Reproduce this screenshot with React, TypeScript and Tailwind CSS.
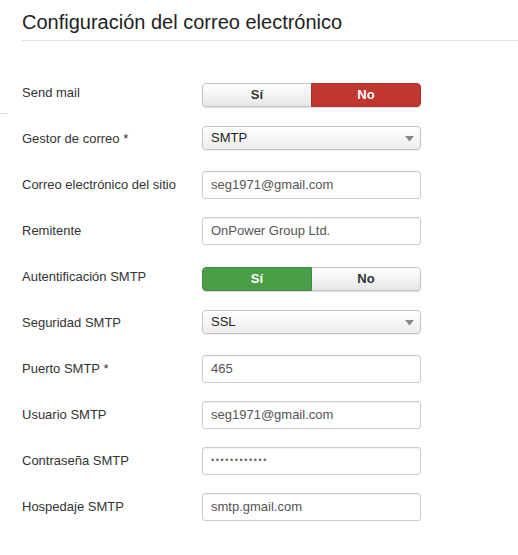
import React from "react";

const font = { fontFamily: '"Liberation Sans", Arial, sans-serif' };

function Toggle({ value }: { value: "yes" | "no" }) {
  const base =
    "flex-1 flex items-center justify-center text-[13px] font-bold h-full";
  return (
    <div className="flex w-[219px] h-[24px] mt-[4px] rounded-[4px] overflow-hidden shadow-[0_1px_1px_rgba(0,0,0,0.15)]">
      {value === "yes" ? (
        <>
          <div className={`${base} text-white bg-[#4a9e48] border border-[#3f8a3e] rounded-l-[4px]`}>Sí</div>
          <div className={`${base} text-[#333] bg-gradient-to-b from-white to-[#e6e6e6] border border-l-0 border-[#c4c4c4] rounded-r-[4px]`}>No</div>
        </>
      ) : (
        <>
          <div className={`${base} text-[#333] bg-gradient-to-b from-white to-[#e6e6e6] border border-r-0 border-[#c4c4c4] rounded-l-[4px]`}>Sí</div>
          <div className={`${base} text-white bg-[#c0372f] border border-[#a9302a] rounded-r-[4px]`}>No</div>
        </>
      )}
    </div>
  );
}

function Select({ value }: { value: string }) {
  return (
    <div className="relative flex items-center w-[219px] h-[24px] mt-[1px] rounded-[4px] border border-[#c4c4c4] bg-gradient-to-b from-white to-[#ededed] shadow-[0_1px_1px_rgba(0,0,0,0.08)] pl-[8px]">
      <span className="text-[13px] text-[#222]">{value}</span>
      <svg className="absolute right-[6px] top-[9px]" width="9" height="6" viewBox="0 0 9 6">
        <path d="M0 0 L9 0 L4.5 5.5 Z" fill="#888" />
      </svg>
    </div>
  );
}

function Input({ value, password }: { value: string; password?: boolean }) {
  return (
    <div className="flex items-center w-[219px] h-[28px] rounded-[3px] border border-[#cccccc] bg-white shadow-[inset_0_1px_1px_rgba(0,0,0,0.06)] pl-[8px]">
      <span className={password ? "text-[9px] text-[#666] tracking-[1.6px]" : "text-[13px] text-[#555]"}>{value}</span>
    </div>
  );
}

type Row = { label: string; control: React.ReactNode };

const rows: Row[] = [
  { label: "Send mail", control: <Toggle value="no" /> },
  { label: "Gestor de correo *", control: <Select value="SMTP" /> },
  { label: "Correo electrónico del sitio", control: <Input value="seg1971@gmail.com" /> },
  { label: "Remitente", control: <Input value="OnPower Group Ltd." /> },
  { label: "Autentificación SMTP", control: <Toggle value="yes" /> },
  { label: "Seguridad SMTP", control: <Select value="SSL" /> },
  { label: "Puerto SMTP *", control: <Input value="465" /> },
  { label: "Usuario SMTP", control: <Input value="seg1971@gmail.com" /> },
  { label: "Contraseña SMTP", control: <Input value="••••••••••••" password /> },
  { label: "Hospedaje SMTP", control: <Input value="smtp.gmail.com" /> },
];

export default function App() {
  return (
    <div className="relative w-[518px] h-[555px] bg-white overflow-hidden" style={font}>
      <div className="absolute left-0 top-[113px] w-[8px] h-px bg-[#e0e0e0]" />
      <div className="pl-[22px] pt-[9px]">
        <h2 className="text-[20px] leading-[26px] text-[#222] font-normal pb-[5px] border-b border-[#e2e2e2]">
          Configuración del correo electrónico
        </h2>
        <div className="flex flex-col gap-[18px] pt-[38px]">
          {rows.map((r) => (
            <div key={r.label} className="flex h-[28px]">
              <div className="w-[180px] pt-[5px] text-[13px] leading-[18px] text-[#333]">{r.label}</div>
              <div>{r.control}</div>
            </div>
          ))}
        </div>
      </div>
    </div>
  );
}
